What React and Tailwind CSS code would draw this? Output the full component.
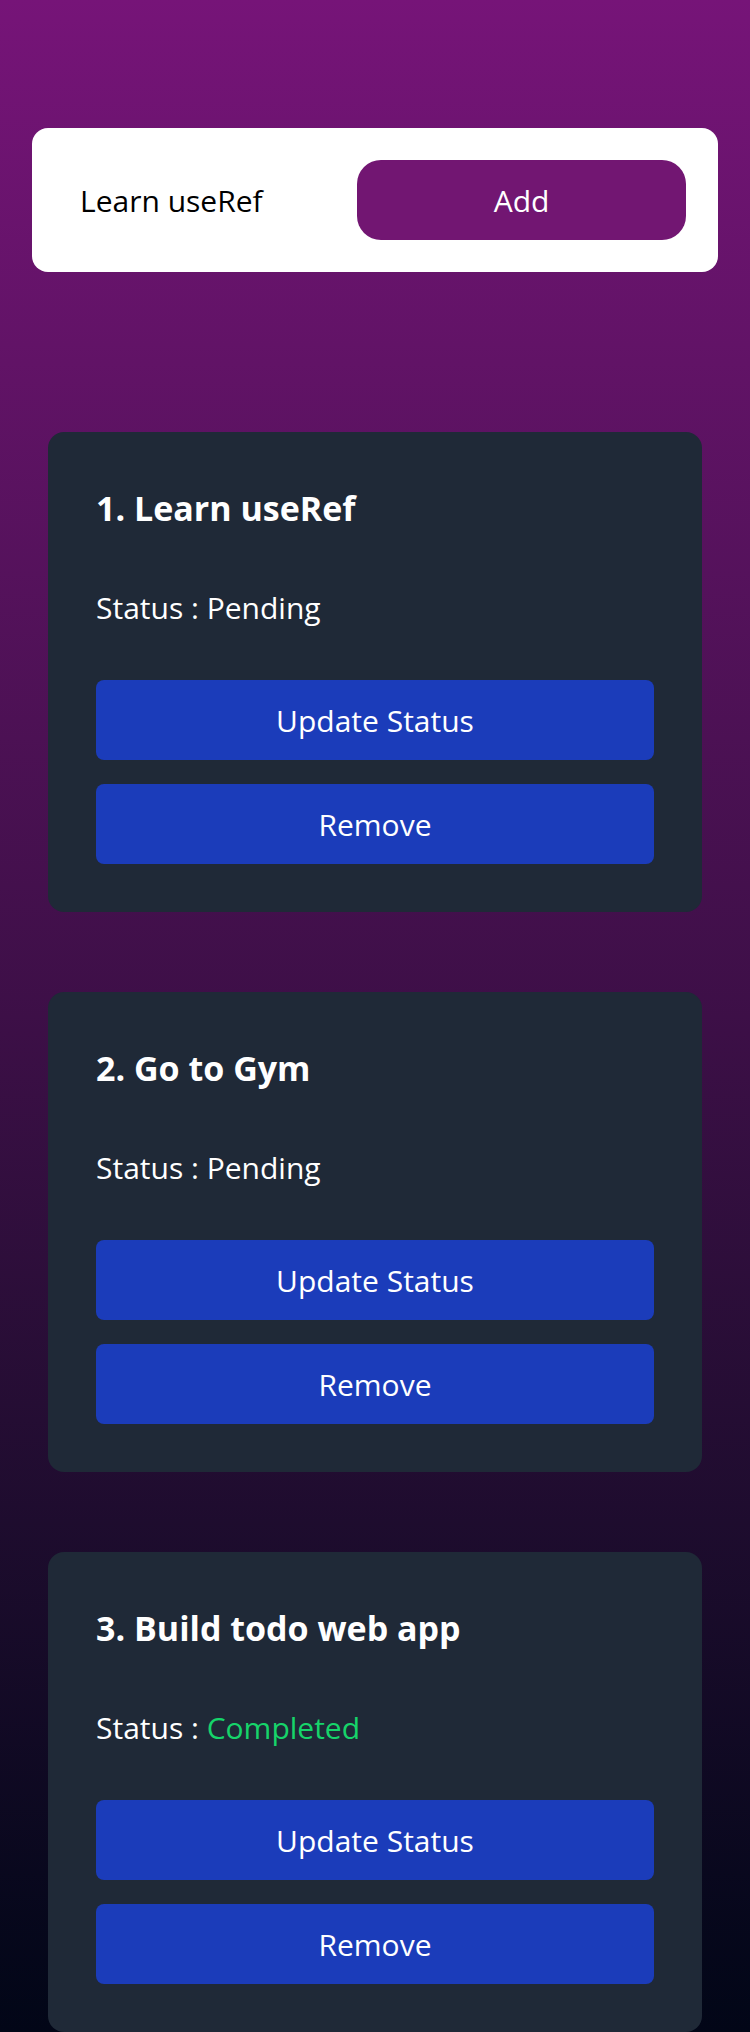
import React, { useState } from 'react';

const initialTodos = [
  { id: 1, title: 'Learn useRef', done: false },
  { id: 2, title: 'Go to Gym', done: false },
  { id: 3, title: 'Build todo web app', done: true },
];

const TodoCard = ({ index, todo, onToggle, onRemove }) => (
  <div className="bg-[#1f2937] rounded-2xl p-12 text-white">
    <h2 className="mt-1 text-[34px] leading-[48px] font-bold">
      {index + 1}. {todo.title}
    </h2>
    <p className="mt-[54px] text-[30px] leading-[44px]">
      Status : {todo.done ? <span className="text-[#16d46a]">Completed</span> : 'Pending'}
    </p>
    <div className="mt-[50px] flex flex-col gap-6">
      <button onClick={onToggle} className="h-20 w-full rounded-lg bg-[#1b3cba] text-[30px] text-white">
        Update Status
      </button>
      <button onClick={onRemove} className="h-20 w-full rounded-lg bg-[#1b3cba] text-[30px] text-white">
        Remove
      </button>
    </div>
  </div>
);

const App = () => {
  const [todos, setTodos] = useState(initialTodos);
  const [text, setText] = useState('Learn useRef');

  const addTodo = (e) => {
    e.preventDefault();
    if (!text.trim()) return;
    setTodos([...todos, { id: Date.now(), title: text.trim(), done: false }]);
    setText('');
  };

  const toggle = (id) => setTodos(todos.map(t => (t.id === id ? { ...t, done: !t.done } : t)));
  const remove = (id) => setTodos(todos.filter(t => t.id !== id));

  return (
    <div className="min-h-screen bg-gradient-to-b from-[#761478] via-[#3d0f47] to-[#020617] px-8 pt-32 font-['Open_Sans',sans-serif]">
      <form onSubmit={addTodo} className="bg-white rounded-2xl p-8 flex items-center gap-4">
        <input
          value={text}
          onChange={(e) => setText(e.target.value)}
          className="flex-1 min-w-0 h-20 px-4 text-[30px] text-black outline-none bg-transparent"
        />
        <button type="submit" className="w-[329px] h-20 shrink-0 rounded-3xl bg-[#721672] text-white text-[30px]">
          Add
        </button>
      </form>

      <div className="mt-40 px-4 flex flex-col gap-20">
        {todos.map((todo, i) => (
          <TodoCard
            key={todo.id}
            index={i}
            todo={todo}
            onToggle={() => toggle(todo.id)}
            onRemove={() => remove(todo.id)}
          />
        ))}
      </div>
    </div>
  );
};

export default App;
